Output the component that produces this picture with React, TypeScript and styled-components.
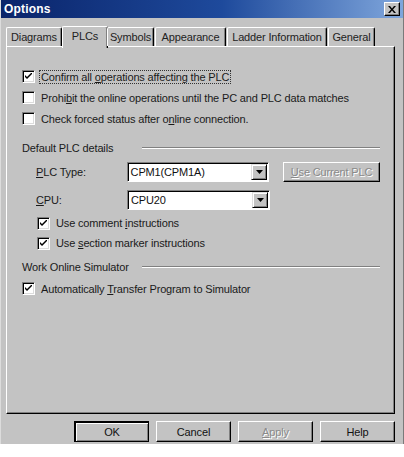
import React from 'react'
import styled, { createGlobalStyle, css } from 'styled-components'

const GlobalStyle = createGlobalStyle`
  html, body {
    margin: 0;
    padding: 0;
    background: #ffffff;
  }
  body {
    font-family: "Liberation Sans", Arial, sans-serif;
    font-size: 11px;
    letter-spacing: -0.15px;
    color: #000;
  }
`

const Window = styled.div`
  width: 404px;
  height: 444px;
  background: #c3c3c3;
  display: flex;
  flex-direction: column;
  box-sizing: border-box;
  border-left: 1px solid #dcdcdc;
  border-right: 1px solid #7a7a7a;
`

const TitleBar = styled.div`
  height: 18px;
  display: flex;
  align-items: center;
  justify-content: space-between;
  padding: 0 3px 0 3px;
  background: linear-gradient(to right, #0a246a 0%, #1e4a9c 55%, #7fa6dc 100%);
`

const Title = styled.span`
  color: #ffffff;
  font-weight: bold;
  font-size: 12px;
  letter-spacing: 0.2px;
`

const CloseButton = styled.div`
  width: 16px;
  height: 14px;
  box-sizing: border-box;
  background: #c3c3c3;
  border-top: 1px solid #fff;
  border-left: 1px solid #fff;
  border-right: 1px solid #000;
  border-bottom: 1px solid #000;
  box-shadow: inset -1px -1px 0 #808080;
  display: flex;
  align-items: center;
  justify-content: center;
`

const Body = styled.div`
  flex: 1;
  display: flex;
  flex-direction: column;
  padding: 6px 7px 0 5px;
`

const TabRow = styled.div`
  display: flex;
  align-items: flex-end;
  height: 22px;
  position: relative;
  z-index: 2;
`

const Tab = styled.div<{ $active?: boolean; $w: number }>`
  box-sizing: border-box;
  width: ${p => p.$w}px;
  height: 19px;
  display: flex;
  align-items: center;
  justify-content: center;
  background: #c3c3c3;
  border-top: 1px solid #fff;
  border-left: 1px solid #fff;
  border-right: 1px solid #000;
  box-shadow: inset -1px 0 0 #808080;
  border-radius: 2px 2px 0 0;
  margin-right: 1px;
  color: #222;
  ${p =>
    p.$active &&
    css`
      height: 22px;
      margin-bottom: -2px;
      margin-left: -1px;
      margin-right: -1px;
      padding-bottom: 4px;
    `}
`

const Panel = styled.div`
  flex: 1;
  box-sizing: border-box;
  border-top: 1px solid #fff;
  border-left: 1px solid #fff;
  border-right: 1px solid #000;
  border-bottom: 1px solid #000;
  box-shadow: inset -1px -1px 0 #808080;
  padding: 19px 14px 0 15px;
  display: flex;
  flex-direction: column;
  margin-right: 1px;
`

const CheckRow = styled.div<{ $indent?: number; $top?: number; $h?: number }>`
  height: ${p => p.$h ?? 21}px;
  display: flex;
  align-items: center;
  margin-left: ${p => p.$indent ?? 0}px;
  margin-top: ${p => p.$top ?? 0}px;
`

const Box = styled.div`
  width: 13px;
  height: 13px;
  box-sizing: border-box;
  background: #fff;
  border-top: 1px solid #808080;
  border-left: 1px solid #808080;
  border-right: 1px solid #fff;
  border-bottom: 1px solid #fff;
  box-shadow: inset 1px 1px 0 #000, inset -1px -1px 0 #dcdcdc;
  display: flex;
  align-items: center;
  justify-content: center;
  flex: none;
`

const CheckLabel = styled.span<{ $focus?: boolean }>`
  margin-left: 4px;
  padding: 0 1px;
  border: 1px dotted ${p => (p.$focus ? '#333' : 'transparent')};
  color: #1a1a1a;
  white-space: nowrap;
`

const GroupHeader = styled.div<{ $top: number }>`
  display: flex;
  align-items: center;
  height: 14px;
  margin-top: ${p => p.$top}px;
  color: #1a1a1a;
`

const GroupTitle = styled.span`
  width: 120px;
  flex: none;
  white-space: nowrap;
`

const GroupLine = styled.div`
  flex: 1;
  height: 0;
  border-top: 1px solid #808080;
  border-bottom: 1px solid #fff;
`

const FieldRow = styled.div<{ $top: number }>`
  display: flex;
  align-items: center;
  margin-top: ${p => p.$top}px;
  margin-left: 14px;
  height: 20px;
`

const FieldLabel = styled.span`
  width: 91px;
  color: #1a1a1a;
`

const Combo = styled.div`
  width: 143px;
  height: 20px;
  box-sizing: border-box;
  background: #fff;
  border-top: 1px solid #808080;
  border-left: 1px solid #808080;
  border-right: 1px solid #fff;
  border-bottom: 1px solid #fff;
  box-shadow: inset 1px 1px 0 #000;
  display: flex;
  align-items: center;
  padding: 0 1px 0 3px;
`

const ComboText = styled.span`
  flex: 1;
  color: #111;
`

const DropButton = styled.div`
  width: 16px;
  height: 16px;
  box-sizing: border-box;
  background: #c3c3c3;
  border-top: 1px solid #dfdfdf;
  border-left: 1px solid #dfdfdf;
  border-right: 1px solid #000;
  border-bottom: 1px solid #000;
  box-shadow: inset 1px 1px 0 #fff, inset -1px -1px 0 #808080;
  display: flex;
  align-items: center;
  justify-content: center;
`

const Button = styled.div<{ $w: number; $h?: number; $default?: boolean; $disabled?: boolean }>`
  width: ${p => p.$w}px;
  height: ${p => p.$h ?? 21}px;
  box-sizing: border-box;
  background: #c3c3c3;
  border-top: 1px solid #fff;
  border-left: 1px solid #fff;
  border-right: 1px solid #000;
  border-bottom: 1px solid #000;
  box-shadow: inset -1px -1px 0 #808080;
  display: flex;
  align-items: center;
  justify-content: center;
  flex: none;
  color: ${p => (p.$disabled ? '#8a8a8a' : '#111')};
  text-shadow: ${p => (p.$disabled ? '1px 1px 0 #fff' : 'none')};
  ${p =>
    p.$default &&
    css`
      border-top: 2px solid #000;
      border-left: 2px solid #000;
      box-shadow: inset 1px 1px 0 #fff, inset -1px -1px 0 #808080;
    `}
`

const SideButton = styled(Button)`
  margin-left: 14px;
`

const ButtonRow = styled.div`
  height: 30px;
  display: flex;
  justify-content: flex-end;
  align-items: flex-start;
  gap: 7px;
  padding-top: 7px;
  box-sizing: border-box;
  margin-right: 1px;
`

const U = styled.span`
  text-decoration: underline;
  text-underline-offset: 1px;
`

const Check = () => (
  <svg width="7" height="7" viewBox="0 0 7 7">
    <path d="M0 2 L0 4 L2 6 L7 1 L7 -1 L2 4 Z" fill="#000" />
  </svg>
)

const CheckBox = ({ checked }: { checked?: boolean }) => <Box>{checked && <Check />}</Box>

const Arrow = () => (
  <svg width="7" height="4" viewBox="0 0 7 4">
    <path d="M0 0 H7 L3.5 4 Z" fill="#000" />
  </svg>
)

const tabs: [string, number][] = [
  ['Diagrams', 56],
  ['PLCs', 46],
  ['Symbols', 47],
  ['Appearance', 71],
  ['Ladder Information', 100],
  ['General', 47],
]

function App() {
  return (
    <>
      <GlobalStyle />
      <Window>
        <TitleBar>
          <Title>Options</Title>
          <CloseButton>
            <svg width="8" height="7" viewBox="0 0 8 7">
              <path d="M0 0 L2 0 L4 2.5 L6 0 L8 0 L5 3.5 L8 7 L6 7 L4 4.5 L2 7 L0 7 L3 3.5 Z" fill="#000" />
            </svg>
          </CloseButton>
        </TitleBar>
        <Body>
          <TabRow>
            {tabs.map(([name, w]) => (
              <Tab key={name} $w={w} $active={name === 'PLCs'}>
                {name}
              </Tab>
            ))}
          </TabRow>
          <Panel>
            <CheckRow>
              <CheckBox checked />
              <CheckLabel $focus>
                Confirm all <U>o</U>perations affecting the PLC
              </CheckLabel>
            </CheckRow>
            <CheckRow>
              <CheckBox />
              <CheckLabel>
                Prohi<U>b</U>it the online operations until the PC and PLC data matches
              </CheckLabel>
            </CheckRow>
            <CheckRow>
              <CheckBox />
              <CheckLabel>
                Check forced status after o<U>n</U>line connection.
              </CheckLabel>
            </CheckRow>

            <GroupHeader $top={12}>
              <GroupTitle>Default PLC details</GroupTitle>
              <GroupLine />
            </GroupHeader>
            <FieldRow $top={7}>
              <FieldLabel>
                <U>P</U>LC Type:
              </FieldLabel>
              <Combo>
                <ComboText>CPM1(CPM1A)</ComboText>
                <DropButton>
                  <Arrow />
                </DropButton>
              </Combo>
              <SideButton $w={97} $h={20} $disabled>
                <U>U</U>se Current PLC
              </SideButton>
            </FieldRow>
            <FieldRow $top={8}>
              <FieldLabel>
                <U>C</U>PU:
              </FieldLabel>
              <Combo>
                <ComboText>CPU20</ComboText>
                <DropButton>
                  <Arrow />
                </DropButton>
              </Combo>
            </FieldRow>
            <CheckRow $indent={15} $top={3} $h={20}>
              <CheckBox checked />
              <CheckLabel>
                Use comment <U>i</U>nstructions
              </CheckLabel>
            </CheckRow>
            <CheckRow $indent={15} $h={20}>
              <CheckBox checked />
              <CheckLabel>
                Use <U>s</U>ection marker instructions
              </CheckLabel>
            </CheckRow>

            <GroupHeader $top={7}>
              <GroupTitle>Work Online Simulator</GroupTitle>
              <GroupLine />
            </GroupHeader>
            <CheckRow $top={4}>
              <CheckBox checked />
              <CheckLabel>
                Automatically <U>T</U>ransfer Program to Simulator
              </CheckLabel>
            </CheckRow>
          </Panel>
          <ButtonRow>
            <Button $w={75} $default>
              OK
            </Button>
            <Button $w={75}>Cancel</Button>
            <Button $w={75} $disabled>
              <U>A</U>pply
            </Button>
            <Button $w={75}>Help</Button>
          </ButtonRow>
        </Body>
      </Window>
    </>
  )
}

export default App
